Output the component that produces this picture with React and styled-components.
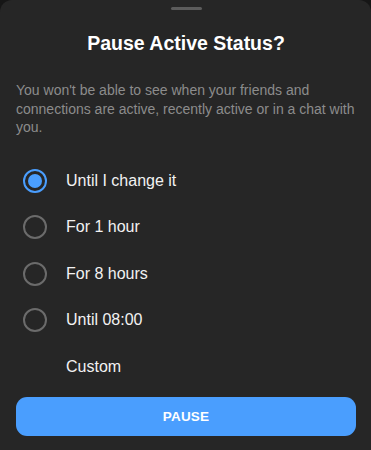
import React, { useState } from "react";
import styled, { createGlobalStyle } from "styled-components";

const Global = createGlobalStyle`
  html, body { margin: 0; padding: 0; background: #161616; }
  body { font-family: "Liberation Sans", Arial, sans-serif; -webkit-font-smoothing: antialiased; }
`;

const Sheet = styled.div`
  width: 371px;
  height: 450px;
  box-sizing: border-box;
  background: #262626;
  border-radius: 12px 12px 0 0;
  display: flex;
  flex-direction: column;
  padding: 7px 15px 0 16px;
  overflow: hidden;
`;

const Handle = styled.div`
  align-self: center;
  width: 31px;
  height: 3px;
  border-radius: 2px;
  background: #5c5c5c;
`;

const Title = styled.h1`
  margin: 21px 0 0;
  text-align: center;
  color: #ffffff;
  font-size: 19.5px;
  font-weight: 700;
  line-height: 24px;
`;

const Description = styled.p`
  margin: 26px 0 0;
  color: #8c8c8c;
  font-size: 14px;
  line-height: 18.5px;
`;

const Options = styled.div`
  display: flex;
  flex-direction: column;
  margin-top: 21px;
`;

const Row = styled.label`
  display: flex;
  align-items: center;
  height: 46.5px;
  gap: 19px;
  cursor: pointer;
`;

const Radio = styled.span`
  width: 24px;
  height: 24px;
  box-sizing: border-box;
  border-radius: 50%;
  flex: none;
  margin-left: 7px;
  display: flex;
  align-items: center;
  justify-content: center;
  border: 2px solid ${(p) => (p.$checked ? "#4a9efe" : "#6b6b6b")};
  visibility: ${(p) => (p.$hidden ? "hidden" : "visible")};
  &::after {
    content: "";
    width: 14px;
    height: 14px;
    border-radius: 50%;
    background: #4a9efe;
    display: ${(p) => (p.$checked ? "block" : "none")};
  }
`;

const Label = styled.span`
  color: #f2f2f2;
  font-size: 16px;
`;

const Button = styled.button`
  margin-top: 7px;
  height: 39px;
  border: none;
  border-radius: 11px;
  background: #4a9efe;
  color: #ffffff;
  font-family: inherit;
  font-size: 13.5px;
  font-weight: 700;
  letter-spacing: 0.2px;
`;

const options = [
  { label: "Until I change it" },
  { label: "For 1 hour" },
  { label: "For 8 hours" },
  { label: "Until 08:00" },
  { label: "Custom", noRadio: true },
];

export default function App() {
  const [sel, setSel] = useState(0);
  return (
    <>
      <Global />
      <Sheet>
        <Handle />
        <Title>Pause Active Status?</Title>
        <Description>
          You won't be able to see when your friends and connections are active, recently active or in a chat with you.
        </Description>
        <Options>
          {options.map((o, i) => (
            <Row key={o.label} onClick={() => setSel(i)}>
              <Radio $checked={sel === i} $hidden={o.noRadio} />
              <Label>{o.label}</Label>
            </Row>
          ))}
        </Options>
        <Button>PAUSE</Button>
      </Sheet>
    </>
  );
}
